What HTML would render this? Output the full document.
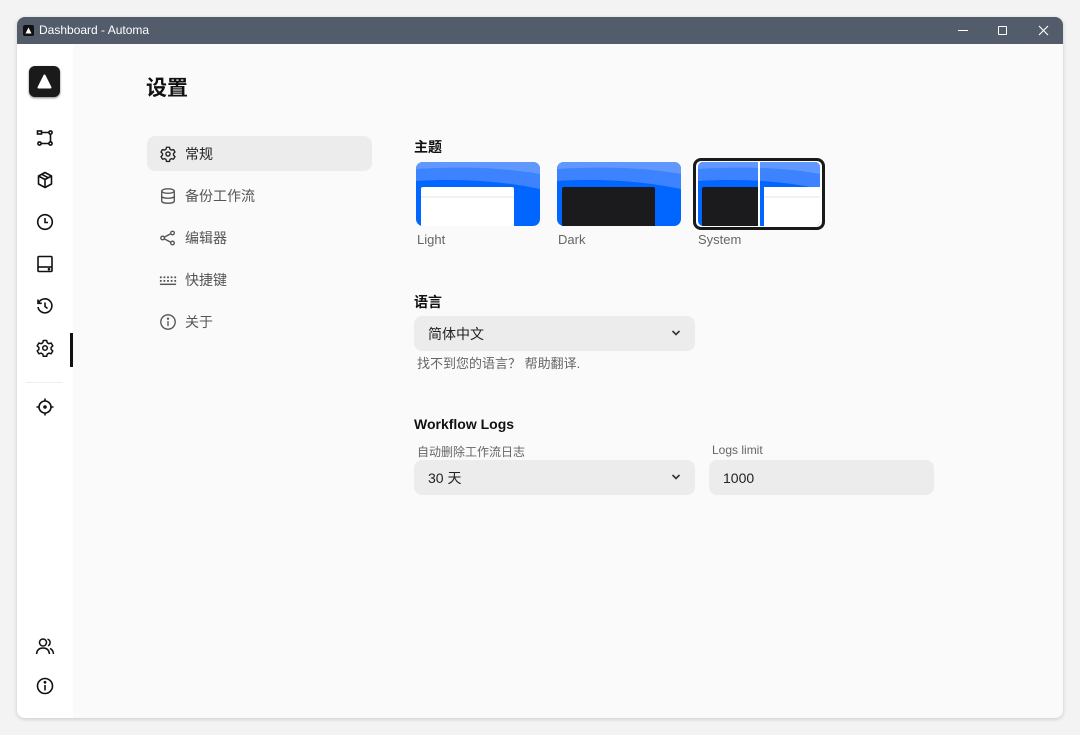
<!DOCTYPE html>
<html><head><meta charset="utf-8"><style>
*{box-sizing:border-box;margin:0;padding:0}
body{width:1080px;height:735px;background:#f3f3f3;font-family:"Liberation Sans","Noto Sans CJK SC",sans-serif;position:relative;overflow:hidden}
.win{position:absolute;left:17px;top:17px;width:1046px;height:701px;background:#fafafa;border-radius:8px;overflow:hidden;box-shadow:0 1px 4px rgba(0,0,0,.18)}
.tb{position:absolute;left:0;top:0;width:100%;height:27px;background:#525c6b;color:#fff;font-size:12px}
.side{position:absolute;left:0;top:27px;width:56px;height:674px;background:#fff}
.ic{position:absolute;left:18px;width:20px;height:20px}
.abs{position:absolute}
.nav{position:absolute;left:130px;width:225px;height:35px;border-radius:8px;font-size:14px;color:#555;display:flex;align-items:center;padding-left:12px}
.nav svg{margin-right:8px}
.h{position:absolute;font-size:14px;font-weight:bold;color:#111}
.sel{position:absolute;background:#ececec;border-radius:8px;font-size:14px;color:#222;display:flex;align-items:center;padding-left:14px}
.lbl{position:absolute;font-size:12px;color:#666}
</style></head><body>
<div class="win">
 <div class="tb">
  <div class="abs" style="left:6px;top:8px;width:11px;height:11px;background:#111;border-radius:2px"><svg width="11" height="11"><path d="M5.5 2.5L8.5 8.5H2.5Z" fill="#fff"/></svg></div>
  <div class="abs" style="left:22px;top:6px">Dashboard - Automa</div>
  <div class="abs" style="left:941px;top:13px;width:10px;height:1px;background:#fff"></div>
  <div class="abs" style="left:981px;top:9px;width:9px;height:9px;border:1px solid #fff;border-radius:1px"></div>
  <svg class="abs" style="left:1021px;top:8px" width="11" height="11"><path d="M1 1L10 10M10 1L1 10" stroke="#fff" stroke-width="1.1"/></svg>
 </div>
 <div class="side">
  <div class="abs" style="left:12px;top:22px;width:31px;height:31px;background:#1a1a1a;border-radius:6px;box-shadow:0 1px 2px rgba(0,0,0,.5)"><svg width="31" height="31"><path d="M15.5 9.5L21.5 21.5H9.5Z" fill="#fff" stroke="#fff" stroke-width="2" stroke-linejoin="round"/></svg></div>
  <svg class="ic" style="top:84px" viewBox="0 0 20 20" fill="none" stroke="#111" stroke-width="1.6"><rect x="2.5" y="3" width="4" height="3"/><circle cx="15.5" cy="4.5" r="1.6"/><circle cx="4.5" cy="15.5" r="1.6"/><circle cx="15.5" cy="15.5" r="1.6"/><path d="M6.5 4.5H14M15.5 6V14M6 15.5H14"/></svg>
  <svg class="ic" style="top:126px" viewBox="0 0 20 20" fill="none" stroke="#111" stroke-width="1.6" stroke-linejoin="round"><path d="M10 2.5L16.5 6V14L10 17.5L3.5 14V6Z M3.5 6L10 9.5L16.5 6M10 9.5V17.5M6.8 4.3L13.3 7.8"/></svg>
  <svg class="ic" style="top:168px" viewBox="0 0 20 20" fill="none" stroke="#111" stroke-width="1.6"><circle cx="10" cy="10" r="7.3"/><path d="M10 6V10.5H13"/></svg>
  <svg class="ic" style="top:210px" viewBox="0 0 20 20" fill="none" stroke="#111" stroke-width="1.6"><rect x="3" y="2.5" width="14" height="15" rx="1"/><path d="M3 13H17"/><circle cx="14" cy="15.2" r=".5" fill="#111"/></svg>
  <svg class="ic" style="top:252px" viewBox="0 0 20 20" fill="none" stroke="#111" stroke-width="1.6"><path d="M3.5 7A7 7 0 1 1 3 11M3 3.5V7.3H6.8"/><path d="M10 6.5V10.5L12.5 12.5"/></svg>
  <svg class="ic" style="top:294px" viewBox="0 0 20 20" fill="none" stroke="#111" stroke-width="1.5" stroke-linejoin="round"><path d="M8.3 2.5h3.4l.5 2.2 1.7 1 2.2-.7 1.7 2.9-1.7 1.5v2l1.7 1.5-1.7 2.9-2.2-.7-1.7 1-.5 2.2H8.3l-.5-2.2-1.7-1-2.2.7-1.7-2.9 1.7-1.5v-2L2.2 7.9l1.7-2.9 2.2.7 1.7-1z"/><circle cx="10" cy="10" r="2.3"/></svg>
  <div class="abs" style="left:53px;top:289px;width:3px;height:34px;background:#111"></div>
  <div class="abs" style="left:9px;top:338px;width:37px;height:1px;background:#eee"></div>
  <svg class="ic" style="top:353px" viewBox="0 0 20 20" fill="none" stroke="#111" stroke-width="1.6"><circle cx="10" cy="10" r="6"/><circle cx="10" cy="10" r="1" fill="#111"/><path d="M10 1.5V4M10 16V18.5M1.5 10H4M16 10H18.5"/></svg>
  <svg class="ic" style="top:592px" viewBox="0 0 20 20" fill="none" stroke="#111" stroke-width="1.5"><circle cx="8" cy="6.5" r="3.5"/><path d="M1.5 18C2 13.5 4.5 12 8 12S14 13.5 14.5 18M12.5 3.2A3.5 3.5 0 0 1 13 9.8M15 12.5C17 13.3 18.2 15 18.5 18"/></svg>
  <svg class="ic" style="top:632px" viewBox="0 0 20 20" fill="none" stroke="#111" stroke-width="1.6"><circle cx="10" cy="10" r="7.5"/><path d="M10 9V14.5"/><circle cx="10" cy="6.3" r=".6" fill="#111"/></svg>
 </div>
 <div class="abs" style="left:129px;top:55px;font-size:21px;font-weight:bold;color:#111">设置</div>
 <div class="nav" style="top:119px;background:#ececec;color:#222"><svg width="18" height="18" viewBox="0 0 20 20" fill="none" stroke="#222" stroke-width="1.5" stroke-linejoin="round"><path d="M8.3 2.5h3.4l.5 2.2 1.7 1 2.2-.7 1.7 2.9-1.7 1.5v2l1.7 1.5-1.7 2.9-2.2-.7-1.7 1-.5 2.2H8.3l-.5-2.2-1.7-1-2.2.7-1.7-2.9 1.7-1.5v-2L2.2 7.9l1.7-2.9 2.2.7 1.7-1z"/><circle cx="10" cy="10" r="2.3"/></svg>常规</div>
 <div class="nav" style="top:161px"><svg width="18" height="18" viewBox="0 0 20 20" fill="none" stroke="#555" stroke-width="1.5"><ellipse cx="10" cy="4.5" rx="7" ry="2.5"/><path d="M3 4.5V15.5C3 17 6 18 10 18S17 17 17 15.5V4.5M3 10C3 11.5 6 12.5 10 12.5S17 11.5 17 10"/></svg>备份工作流</div>
 <div class="nav" style="top:203px"><svg width="18" height="18" viewBox="0 0 20 20" fill="none" stroke="#555" stroke-width="1.5"><circle cx="4" cy="10" r="2"/><circle cx="15" cy="4.5" r="2"/><circle cx="15" cy="15.5" r="2"/><path d="M6 9L13 5.3M6 11L13 14.7"/></svg>编辑器</div>
 <div class="nav" style="top:245px"><svg width="18" height="18" viewBox="0 0 20 20" fill="#555"><rect x="1" y="6" width="2" height="2"/><rect x="5" y="6" width="2" height="2"/><rect x="9" y="6" width="2" height="2"/><rect x="13" y="6" width="2" height="2"/><rect x="17" y="6" width="2" height="2"/><rect x="1" y="10" width="2" height="2"/><rect x="5" y="10" width="2" height="2"/><rect x="9" y="10" width="2" height="2"/><rect x="13" y="10" width="2" height="2"/><rect x="17" y="10" width="2" height="2"/><rect x="1" y="14" width="18" height="1.6"/></svg>快捷键</div>
 <div class="nav" style="top:287px"><svg width="18" height="18" viewBox="0 0 20 20" fill="none" stroke="#555" stroke-width="1.5"><circle cx="10" cy="10" r="8"/><path d="M10 9V14.5"/><circle cx="10" cy="6.3" r=".6" fill="#555"/></svg>关于</div>

 <div class="h" style="left:397px;top:120px">主题</div>
 <svg class="abs" style="left:399px;top:145px" width="124" height="64"><defs><clipPath id="c1"><rect width="124" height="64" rx="7"/></clipPath></defs><g clip-path="url(#c1)"><rect width="124" height="64" fill="#0066ff"/><path d="M0 0H124V27C90 20 50 16 0 19Z" fill="#3d82ff"/><path d="M0 0H124V12C90 6 50 4 0 7Z" fill="#6098ff"/><rect x="5" y="25" width="93" height="45" rx="2" fill="#fff"/><path d="M5 35H98" stroke="#e4e4e4"/></g></svg>
 <div class="lbl" style="left:400px;top:215px;font-size:13px">Light</div>
 <svg class="abs" style="left:540px;top:145px" width="124" height="64"><defs><clipPath id="c2"><rect width="124" height="64" rx="7"/></clipPath></defs><g clip-path="url(#c2)"><rect width="124" height="64" fill="#0066ff"/><path d="M0 0H124V27C90 20 50 16 0 19Z" fill="#3d82ff"/><path d="M0 0H124V12C90 6 50 4 0 7Z" fill="#6098ff"/><rect x="5" y="25" width="93" height="45" rx="2" fill="#1b1b1d"/></g></svg>
 <div class="lbl" style="left:541px;top:215px;font-size:13px">Dark</div>
 <div class="abs" style="left:676px;top:141px;width:132px;height:72px;border:3px solid #1a1a1a;border-radius:8px;background:#fff;padding:2px"></div>
 <svg class="abs" style="left:681px;top:145px" width="122" height="64"><defs><clipPath id="c3"><rect width="122" height="64" rx="5"/></clipPath></defs><g clip-path="url(#c3)"><rect width="122" height="64" fill="#0066ff"/><path d="M0 0H122V27C90 20 50 16 0 19Z" fill="#3d82ff"/><path d="M0 0H122V12C90 6 50 4 0 7Z" fill="#6098ff"/><rect x="4" y="25" width="58" height="45" rx="2" fill="#1b1b1d"/><rect x="60" y="0" width="2" height="64" fill="#fff"/><rect x="66" y="25" width="60" height="45" fill="#fff"/><path d="M66 35H122" stroke="#e4e4e4"/></g></svg>
 <div class="lbl" style="left:681px;top:215px;font-size:13px">System</div>

 <div class="h" style="left:397px;top:275px">语言</div>
 <div class="sel" style="left:397px;top:299px;width:281px;height:35px">简体中文</div>
 <svg class="abs" style="left:654px;top:312px" width="10" height="8"><path d="M1.5 2L5 5.5L8.5 2" fill="none" stroke="#333" stroke-width="1.6"/></svg>
 <div class="lbl" style="left:400px;top:336px;font-size:13px">找不到您的语言？ 帮助翻译.</div>

 <div class="h" style="left:397px;top:399px">Workflow Logs</div>
 <div class="lbl" style="left:400px;top:426px">自动删除工作流日志</div>
 <div class="sel" style="left:397px;top:443px;width:281px;height:35px">30 天</div>
 <svg class="abs" style="left:654px;top:456px" width="10" height="8"><path d="M1.5 2L5 5.5L8.5 2" fill="none" stroke="#333" stroke-width="1.6"/></svg>
 <div class="lbl" style="left:695px;top:426px">Logs limit</div>
 <div class="sel" style="left:692px;top:443px;width:225px;height:35px">1000</div>
</div>
</body></html>
